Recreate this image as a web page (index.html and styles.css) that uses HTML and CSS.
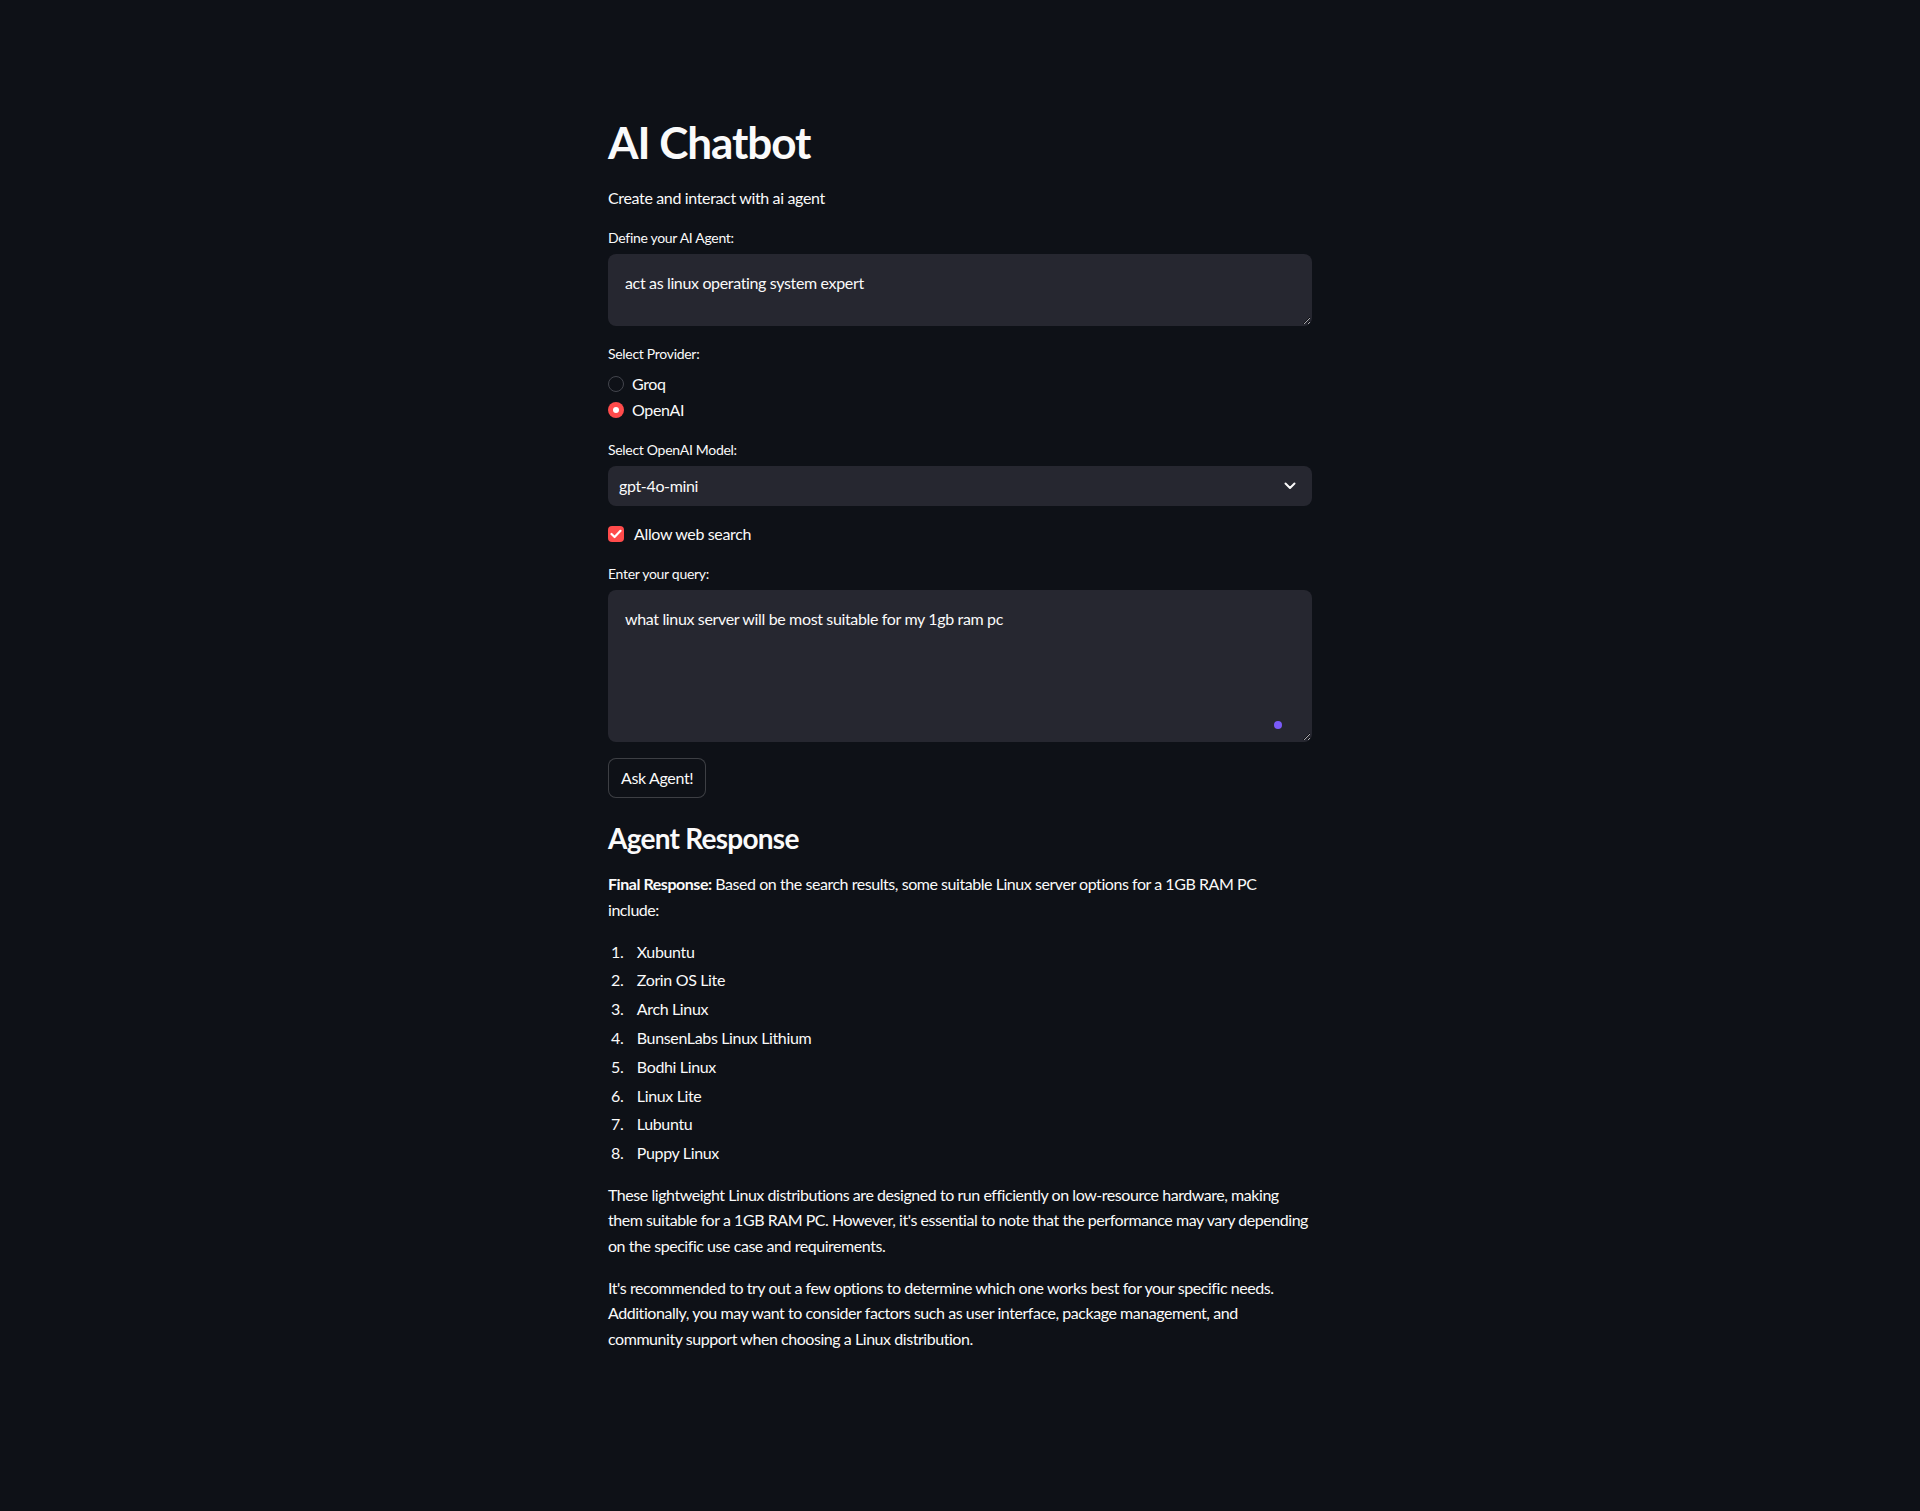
FILE: index.html
```html
<!DOCTYPE html>
<html lang="en">
<head>
<meta charset="utf-8">
<title>AI Chatbot</title>
<link rel="stylesheet" href="styles.css">
</head>
<body>
<main class="main">
  <div class="stack">
    <header class="header">
      <h1 class="title">AI Chatbot</h1>
      <p class="subtitle">Create and interact with ai agent</p>
    </header>

    <div class="field">
      <label class="label" for="agent">Define your AI Agent:</label>
      <textarea id="agent" class="textarea textarea-sm" readonly>act as linux operating system expert</textarea>
    </div>

    <div class="field">
      <div class="label">Select Provider:</div>
      <div class="radio-group">
        <div class="radio-row">
          <span class="radio"></span>
          <span class="radio-text">Groq</span>
        </div>
        <div class="radio-row">
          <span class="radio radio-on"></span>
          <span class="radio-text">OpenAI</span>
        </div>
      </div>
    </div>

    <div class="field">
      <div class="label">Select OpenAI Model:</div>
      <div class="select">
        <span class="select-value">gpt-4o-mini</span>
        <svg class="chevron" width="12" height="8" viewBox="0 0 12 8" aria-hidden="true">
          <polyline points="1.5,1.5 6,6 10.5,1.5" fill="none" stroke="#fafafa" stroke-width="2" stroke-linecap="round" stroke-linejoin="round"/>
        </svg>
      </div>
    </div>

    <div class="checkbox-row">
      <span class="checkbox">
        <svg width="12" height="10" viewBox="0 0 12 10" aria-hidden="true">
          <polyline points="1.5,5 4.6,8 10.5,1.8" fill="none" stroke="#ffffff" stroke-width="2.2" stroke-linecap="round" stroke-linejoin="round"/>
        </svg>
      </span>
      <span class="checkbox-text">Allow web search</span>
    </div>

    <div class="field">
      <label class="label" for="query">Enter your query:</label>
      <div class="textarea-wrap">
        <textarea id="query" class="textarea textarea-lg" readonly>what linux server will be most suitable for my 1gb ram pc</textarea>
        <span class="dot"></span>
      </div>
    </div>

    <div>
      <button class="button" type="button">Ask Agent!</button>
    </div>

    <section class="response">
      <h3 class="subheading">Agent Response</h3>
      <p><strong>Final Response:</strong> Based on the search results, some suitable Linux server options for a 1GB RAM PC<br>include:</p>
      <ol class="list">
        <li>Xubuntu</li>
        <li>Zorin OS Lite</li>
        <li>Arch Linux</li>
        <li>BunsenLabs Linux Lithium</li>
        <li>Bodhi Linux</li>
        <li>Linux Lite</li>
        <li>Lubuntu</li>
        <li>Puppy Linux</li>
      </ol>
      <p>These lightweight Linux distributions are designed to run efficiently on low-resource hardware, making them suitable for a 1GB RAM PC. However, it's essential to note that the performance may vary depending on the specific use case and requirements.</p>
      <p>It's recommended to try out a few options to determine which one works best for your specific needs. Additionally, you may want to consider factors such as user interface, package management, and community support when choosing a Linux distribution.</p>
    </section>
  </div>
</main>
</body>
</html>
```
FILE: styles.css
```css
html, body {
  margin: 0;
  padding: 0;
  background: #0e1117;
}

body {
  color: #fafafa;
  font-family: "Lato", "Liberation Sans", sans-serif;
  font-size: 16px;
  line-height: 1.6;
  letter-spacing: -0.35px;
  min-height: 1511px;
  color-scheme: dark;
}

.main {
  width: 704px;
  margin: 0 auto;
  padding: 96px 0 160px;
}

.stack {
  display: flex;
  flex-direction: column;
  gap: 16px;
}

.header {
  display: flex;
  flex-direction: column;
}

.title {
  margin: 0;
  padding: 20px 0 16px;
  font-size: 44px;
  font-weight: 700;
  line-height: 1.2;
  letter-spacing: -1.05px;
  color: #fafafa;
}

.subtitle {
  margin: 0;
}

.field {
  display: flex;
  flex-direction: column;
}

.label {
  display: flex;
  align-items: center;
  min-height: 24px;
  margin-bottom: 4px;
  font-size: 14px;
  letter-spacing: -0.3px;
  line-height: 1.6;
}

.textarea {
  display: block;
  box-sizing: border-box;
  width: 100%;
  margin: 0;
  padding: 15px 16px;
  border: 1px solid transparent;
  border-radius: 8px;
  background: #262730;
  color: #fafafa;
  font-family: inherit;
  font-size: 16px;
  line-height: 1.6;
  letter-spacing: -0.35px;
  resize: vertical;
  outline: none;
  overflow: hidden;
}

.textarea-sm {
  height: 72px;
}

.textarea-lg {
  height: 152px;
}

.textarea-wrap {
  position: relative;
}

.dot {
  position: absolute;
  right: 30px;
  bottom: 13px;
  width: 8px;
  height: 8px;
  border-radius: 50%;
  background: #7a5af8;
}

.radio-group {
  display: flex;
  flex-direction: column;
  gap: 2px;
  padding-top: 1.5px;
}

.radio-row {
  display: flex;
  align-items: center;
  height: 24px;
  gap: 8px;
}

.radio {
  box-sizing: border-box;
  width: 16px;
  height: 16px;
  border-radius: 50%;
  border: 1.5px solid #43454d;
  background: transparent;
}

.radio-on {
  border: none;
  background: #ff4b4b;
  position: relative;
}

.radio-on::after {
  content: "";
  position: absolute;
  left: 5px;
  top: 5px;
  width: 6px;
  height: 6px;
  border-radius: 50%;
  background: #ffffff;
}

.radio-text {
  font-size: 16px;
}

.select {
  box-sizing: border-box;
  height: 40px;
  display: flex;
  align-items: center;
  justify-content: space-between;
  padding: 0 16px 0 11px;
  border-radius: 8px;
  background: #262730;
}

.chevron {
  display: block;
}

.checkbox-row {
  display: flex;
  align-items: center;
  height: 24px;
  gap: 10px;
}

.checkbox {
  width: 16px;
  height: 16px;
  border-radius: 4px;
  background: #ff4b4b;
  display: flex;
  align-items: center;
  justify-content: center;
}

.checkbox svg {
  display: block;
}

.button {
  box-sizing: border-box;
  height: 40px;
  padding: 4px 12px;
  border: 1px solid rgba(250, 250, 250, 0.2);
  border-radius: 8px;
  background: #0e1117;
  color: #fafafa;
  font-family: inherit;
  font-size: 16px;
  letter-spacing: -0.35px;
  line-height: 1.6;
  cursor: pointer;
}

.response p {
  margin: 0 0 16px;
  letter-spacing: -0.45px;
}

.response p:last-child {
  margin-bottom: 0;
}

.subheading {
  margin: 0;
  padding: 8px 0 16px;
  font-size: 28px;
  font-weight: 700;
  line-height: 1.2;
  letter-spacing: -0.75px;
}

.list {
  margin: 0 0 16px;
  padding: 0;
}

.list li {
  margin: 3.2px 0 3.2px 19.2px;
  padding-left: 9.6px;
}
```
